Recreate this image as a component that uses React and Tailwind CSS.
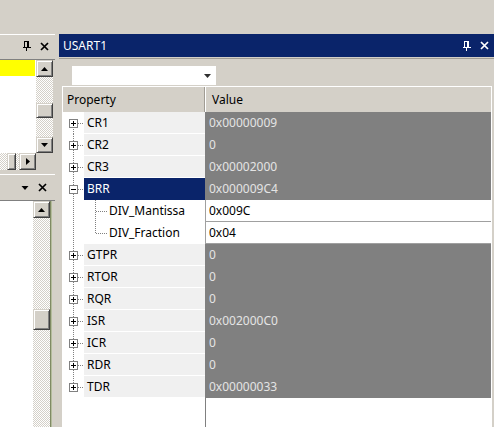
import React from "react";

const btn =
  "bg-[#d4d0c8] border border-t-[#d4d0c8] border-l-[#d4d0c8] border-r-[#404040] border-b-[#404040] shadow-[inset_1px_1px_#ffffff,inset_-1px_-1px_#808080] flex items-center justify-center";
const checker =
  "bg-[image:repeating-conic-gradient(#d4d0c8_0_25%,#ffffff_0_50%)] bg-[length:2px_2px]";

function Pin({ c }) {
  return (
    <svg width="8" height="10" viewBox="0 0 8 10" shapeRendering="crispEdges" className="block shrink-0">
      <rect x="1" y="0" width="5" height="1" fill={c} />
      <rect x="1" y="0" width="1" height="6" fill={c} />
      <rect x="4" y="0" width="2" height="6" fill={c} />
      <rect x="0" y="6" width="8" height="1" fill={c} />
      <rect x="3" y="7" width="1" height="3" fill={c} />
    </svg>
  );
}

function Close({ c }) {
  return (
    <svg width="9" height="9" viewBox="0 0 9 9" className="block shrink-0">
      <path d="M1 1L8 8M8 1L1 8" stroke={c} strokeWidth="1.7" />
    </svg>
  );
}

function Tri({ dir, w = 7 }) {
  const paths = {
    up: "M0 4L3.5 0L7 4Z",
    down: "M0 0L7 0L3.5 4Z",
    right: "M0 0L4 3.5L0 7Z",
  };
  const size = dir === "right" ? [4, 7] : [w, 4];
  return (
    <svg width={size[0]} height={size[1]} viewBox={dir === "right" ? "0 0 4 7" : "0 0 7 4"} className="block">
      <path d={paths[dir]} fill="#000" />
    </svg>
  );
}

function Gutter({ kind, first, last }) {
  const top = first ? 11 : 0;
  const bottom = last ? 12 : 22;
  return (
    <svg width="22" height="22" viewBox="0 0 22 22" className="block shrink-0" shapeRendering="crispEdges">
      <line x1="11.5" y1={top} x2="11.5" y2={bottom} stroke="#808080" strokeDasharray="1 1" />
      {kind !== "line" && (
        <>
          <line x1="16" y1="11.5" x2="22" y2="11.5" stroke="#808080" strokeDasharray="1 1" />
          <rect x="7.5" y="7.5" width="8" height="8" fill="#ffffff" stroke="#808080" />
          <rect x="9" y="11" width="5" height="1" fill="#000" />
          {kind === "plus" && <rect x="11" y="9" width="1" height="5" fill="#000" />}
        </>
      )}
    </svg>
  );
}

function ChildLines({ last }) {
  return (
    <svg width="24" height="22" viewBox="0 0 24 22" className="block shrink-0" shapeRendering="crispEdges">
      <line x1="11.5" y1="0" x2="11.5" y2={last ? 12 : 22} stroke="#808080" strokeDasharray="1 1" />
      <line x1="12" y1="11.5" x2="24" y2="11.5" stroke="#808080" strokeDasharray="1 1" />
    </svg>
  );
}

const rows = [
  { name: "CR1", value: "0x00000009" },
  { name: "CR2", value: "0" },
  { name: "CR3", value: "0x00002000" },
  { name: "BRR", value: "0x000009C4", expanded: true, selected: true },
  { name: "DIV_Mantissa", value: "0x009C", child: true },
  { name: "DIV_Fraction", value: "0x04", child: true, lastChild: true },
  { name: "GTPR", value: "0" },
  { name: "RTOR", value: "0" },
  { name: "RQR", value: "0" },
  { name: "ISR", value: "0x002000C0" },
  { name: "ICR", value: "0" },
  { name: "RDR", value: "0" },
  { name: "TDR", value: "0x00000033" },
];

function Row({ r, i }) {
  const first = i === 0;
  const last = i === rows.length - 1;
  if (r.child) {
    return (
      <div className="h-[22px] flex shrink-0">
        <Gutter kind="line" />
        <div className="w-[121px] bg-white flex items-center">
          <ChildLines last={r.lastChild} />
          <span className="pl-[1px] text-black">{r.name}</span>
        </div>
        <div className="flex-1 bg-white border-l border-b border-[#a0a0a0] flex items-center pl-[3px] text-black">
          {r.value}
        </div>
      </div>
    );
  }
  return (
    <div className="h-[22px] flex shrink-0">
      <Gutter kind={r.expanded ? "minus" : "plus"} first={first} last={last} />
      <div
        className={
          r.selected
            ? "w-[121px] bg-[#0a246a] text-white border-b border-[#0a246a] flex items-center pl-[3px]"
            : "w-[121px] bg-[#f0f0f0] text-black border-b border-white flex items-center pl-[3px]"
        }
      >
        {r.name}
      </div>
      <div className="flex-1 bg-[#808080] border-l border-b border-[#808080] flex items-center pl-[3px] text-[#e4e4e4]">
        {r.value}
      </div>
    </div>
  );
}

function Left() {
  return (
    <div className="w-[55px] shrink-0 flex flex-col">
      <div className="h-[23px] shrink-0 flex items-center pl-[23px] gap-[9px] border-t border-white">
        <Pin c="#000" />
        <Close c="#000" />
      </div>
      <div className="h-[3px] shrink-0 border-b border-[#808080]" />
      <div className="h-[93px] shrink-0 flex">
        <div className="w-[36px] bg-white">
          <div className="h-[16px] w-[35px] bg-[#ffff00]" />
        </div>
        <div className="w-[17px] flex flex-col">
          <div className={btn + " h-[17px] shrink-0"}>
            <Tri dir="up" />
          </div>
          <div className={checker + " flex-1 flex flex-col"}>
            <div className="h-[26px] shrink-0" />
            <div className={btn + " h-[15px] shrink-0"} />
          </div>
          <div className={btn + " h-[16px] shrink-0"}>
            <Tri dir="down" />
          </div>
        </div>
        <div className="w-[2px]" />
      </div>
      <div className="h-[17px] shrink-0 flex">
        <div className={checker + " w-[7px]"} />
        <div className={btn + " w-[9px]"} />
        <div className={checker + " w-[3px]"} />
        <div className={btn + " w-[17px]"}>
          <Tri dir="right" />
        </div>
        <div className="flex-1" />
      </div>
      <div className="h-[5px] shrink-0 border-b border-white" />
      <div className="h-[25px] shrink-0 flex items-center pl-[21px] gap-[9px]">
        <Tri dir="down" w={8} />
        <Close c="#000" />
      </div>
      <div className="h-[1px] shrink-0 bg-[#808080]" />
      <div className="flex-1 flex min-h-0">
        <div className="w-[33px] bg-white" />
        <div className="w-[17px] flex flex-col">
          <div className={btn + " h-[17px] shrink-0"}>
            <Tri dir="up" />
          </div>
          <div className={checker + " flex-1 flex flex-col"}>
            <div className="h-[91px] shrink-0" />
            <div className={btn + " h-[21px] shrink-0"} />
          </div>
        </div>
        <div className="w-[1px] bg-[#7f8a64]" />
        <div className="w-[1px] bg-[#b4bc9c]" />
        <div className="flex-1" />
      </div>
    </div>
  );
}

function Right() {
  return (
    <div className="flex-1 flex flex-col min-w-0">
      <div className="h-[23px] shrink-0 bg-[#0a246a] flex items-center pl-[4px] pr-[5px] text-white">
        <span className="flex-1">USART1</span>
        <Pin c="#ffffff" />
        <div className="w-[9px]" />
        <Close c="#ffffff" />
      </div>
      <div className="h-[1px] shrink-0" />
      <div className="h-[1px] shrink-0 bg-[#a09c94]" />
      <div className="flex-1 flex flex-col pl-[3px] pr-[2px] min-h-0">
        <div className="h-[27px] shrink-0 pt-[7px] pl-[10px]">
          <div className="w-[144px] h-[19px] bg-white flex items-center justify-end pr-[5px]">
            <svg width="7" height="4" viewBox="0 0 7 4" className="block">
              <path d="M0 0L7 0L3.5 4Z" fill="#303030" />
            </svg>
          </div>
        </div>
        <div className="flex-1 flex flex-col border-r border-white bg-white min-h-0">
          <div className="h-[26px] shrink-0 flex bg-[#d4d0c8] border-t border-white">
            <div className="w-[143px] border-l border-white border-r border-r-[#a09c94] flex items-center pl-[4px] text-black">
              Property
            </div>
            <div className="flex-1 border-l border-white flex items-center pl-[6px] text-black">Value</div>
          </div>
          {rows.map((r, i) => (
            <Row key={r.name} r={r} i={i} />
          ))}
          <div className="flex-1 flex">
            <div className="w-[143px] bg-white" />
            <div className="flex-1 bg-white border-l border-[#808080]" />
          </div>
        </div>
      </div>
    </div>
  );
}

export default function App() {
  return (
    <div className="w-[494px] h-[427px] overflow-hidden bg-[#d4d0c8] font-['Noto_Sans',sans-serif] text-[12px] leading-none flex flex-col">
      <div className="h-[34px] shrink-0" />
      <div className="flex flex-1 min-h-0">
        <Left />
        <div className="w-[4px] shrink-0" />
        <Right />
      </div>
    </div>
  );
}
